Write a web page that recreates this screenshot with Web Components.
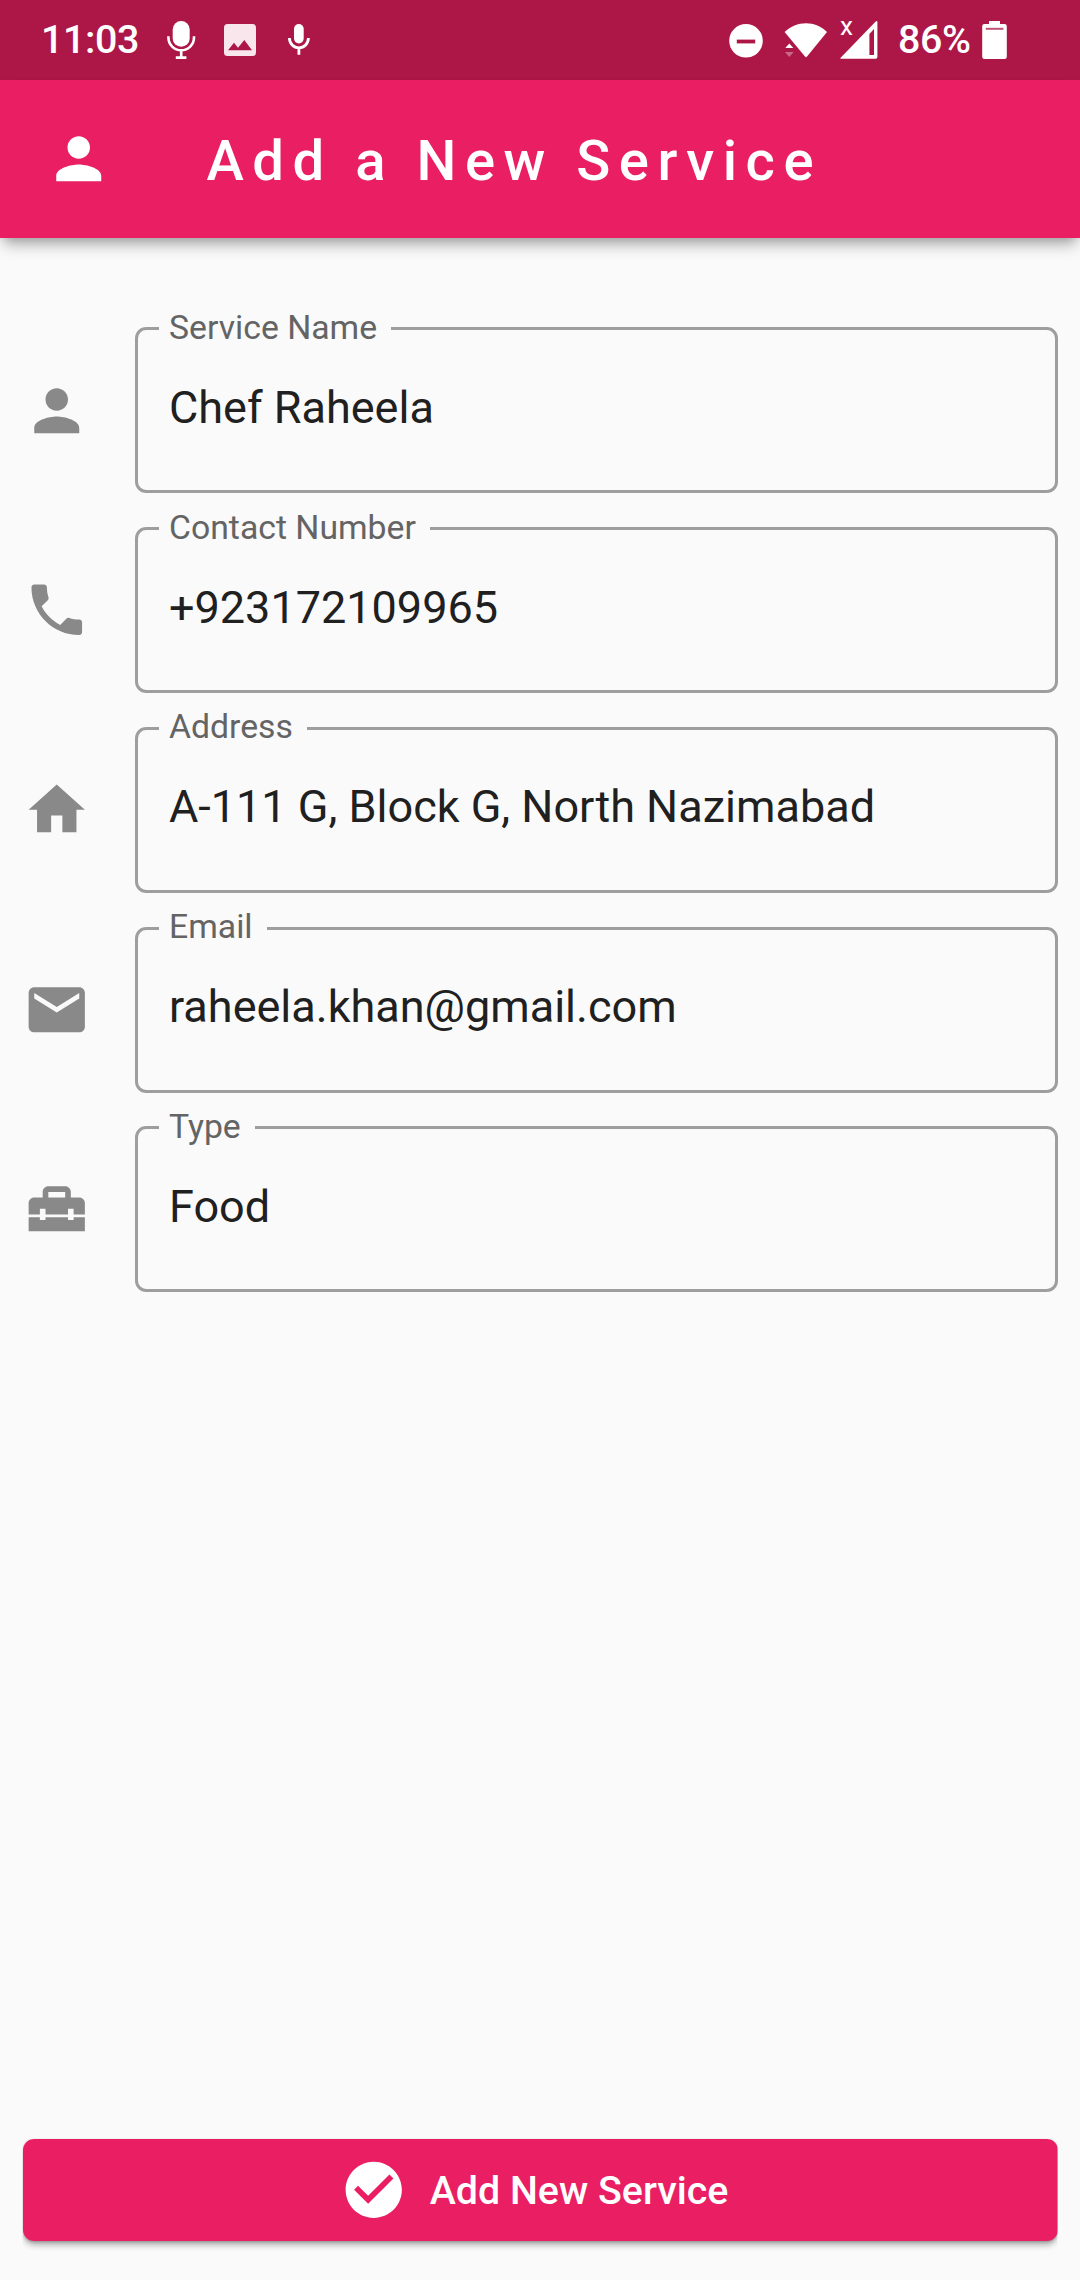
<!DOCTYPE html>
<html lang="en">
<head>
<meta charset="UTF-8">
<title>Add a New Service</title>
<style>
    html, body {
        margin: 0;
        height: 100%;
        background: #fafafa;
        font-family: Roboto, "Noto Sans", sans-serif;
    }
</style>
</head>
<body>
<service-app></service-app>

<script>
// Material icons, 24x24
const ICONS = {
    person: '<path d="M12 12c2.21 0 4-1.79 4-4s-1.79-4-4-4-4 1.79-4 4 1.79 4 4 4zm0 2c-2.67 0-8 1.34-8 4v2h16v-2c0-2.66-5.33-4-8-4z"/>',
    phone: '<path d="M6.62 10.79c1.44 2.83 3.76 5.14 6.59 6.59l2.2-2.2c.27-.27.67-.36 1.02-.24 1.12.37 2.33.57 3.57.57.55 0 1 .45 1 1V20c0 .55-.45 1-1 1-9.39 0-17-7.61-17-17 0-.55.45-1 1-1h3.5c.55 0 1 .45 1 1 0 1.25.2 2.45.57 3.57.11.35.03.74-.25 1.02l-2.2 2.2z"/>',
    home: '<path d="M10 20v-6h4v6h5v-8h3L12 3 2 12h3v8z"/>',
    email: '<path d="M20 4H4c-1.1 0-1.99.9-1.99 2L2 18c0 1.1.9 2 2 2h16c1.1 0 2-.9 2-2V6c0-1.1-.9-2-2-2zm0 4l-8 5-8-5V6l8 5 8-5v2z"/>',
    toolbox: '<path d="M18 16h-2v-1H8v1H6v-1H2v5h20v-5h-4zM20 8h-3V6c0-1.1-.9-2-2-2H9c-1.1 0-2 .9-2 2v2H4c-1.1 0-2 .9-2 2v4h4v-2h2v2h8v-2h2v2h4v-4c0-1.1-.9-2-2-2zm-5 0H9V6h6v2z"/>',
    check: '<path d="M12 2C6.48 2 2 6.48 2 12s4.48 10 10 10 10-4.48 10-10S17.52 2 12 2zm-2 15l-5-5 1.41-1.41L10 14.17l7.59-7.59L19 8l-9 9z"/>'
};

class MdIcon extends HTMLElement {

    constructor() {
        super();
        this.shadow = this.attachShadow({mode: 'open'});
    }

    connectedCallback() {
        this.shadow.innerHTML =
        /*html*/`
        <style>
            :host{
                display:block;
                flex:none;
                width:67.5px;
                height:67.5px;
            }

            svg{
                display:block;
                width:100%;
                height:100%;
                fill:currentColor;
            }
        </style>
        <svg viewBox="0 0 24 24">${ICONS[this.getAttribute('name')]}</svg>
        `;
    }
}

customElements.define('md-icon', MdIcon);

class StatusBar extends HTMLElement {

    constructor() {
        super();
        this.shadow = this.attachShadow({mode: 'open'});
        this.render();
    }

    render() {
        this.shadow.innerHTML =
        /*html*/`
        <style>
            :host{
                display:flex;
                justify-content:space-between;
                align-items:center;
                box-sizing:border-box;
                height:80px;
                padding:0 73px 0 41px;
                background:#ad1748;
                color:white;
                font-size:39.4px;
                font-weight:500;
            }

            .side{
                display:flex;
                align-items:center;
            }

            .left{
                gap:28px;
            }

            .time{
                width:97px;
                padding-bottom:2px;
                letter-spacing:-.4px;
                white-space:nowrap;
            }

            .battery-level{
                width:84px;
                margin-left:20px;
                padding-bottom:2px;
                letter-spacing:-.4px;
                white-space:nowrap;
            }

            svg{
                display:block;
                flex:none;
                height:40px;
                fill:white;
            }

            .wifi{
                margin-left:21px;
            }

            .signal{
                margin-left:13px;
                overflow:visible;
            }

            .line{
                fill:none;
                stroke:white;
            }

            .cut{
                fill:#ad1748;
            }
        </style>
        <div class="side left">
            <span class="time">11:03</span>
            <svg width="30" viewBox="0 0 30 40">
                <rect x="6.7" y="1" width="17" height="25.7" rx="8.5"/>
                <path class="line" stroke-width="2.6" d="M2.4 16.3v1.2a12.8 12.8 0 0 0 25.6 0v-1.2M15.2 30v8M9.8 37.6h10.6"/>
            </svg>
            <svg width="32" viewBox="0 0 32 40">
                <rect y="4" width="32" height="32" rx="3.5" fill="#f8e6ec"/>
                <path class="cut" d="M4 30.3l6-7.6 4 5 6.3-7.7 7.7 10.3z"/>
            </svg>
            <svg width="30" viewBox="0 0 30 40">
                <rect x="10" y="4" width="9.7" height="19.4" rx="4.8"/>
                <path class="line" stroke-width="2.8" d="M5.4 18a9.5 9.9 0 0 0 19 0M14.9 28v6.7"/>
            </svg>
        </div>
        <div class="side">
            <svg width="34" viewBox="0 0 34 40">
                <circle cx="17" cy="20.8" r="16.8"/>
                <rect class="cut" x="7.8" y="19.6" width="18.4" height="3.8"/>
            </svg>
            <svg class="wifi" width="43" viewBox="0 0 43 40">
                <path d="M.6 12C6.6 6 14 3.2 22 3.2S37.2 6 43 12L23 36.6Q22 37.7 21 36.6z"/>
                <path d="M1.3 28l4-4.4 4 4.4z"/>
                <path d="M1 32h8.6l-4.3 5z" opacity=".35"/>
            </svg>
            <svg class="signal" width="38" viewBox="0 0 38 40">
                <path d="M37.4 2v35q0 1.7-1.7 1.7H1q-1.4 0-.4-1L35.7 1.5q1.7-1.3 1.7.5z"/>
                <path class="cut" d="M29.4 14l4.6-5v26h-4.6z"/>
                <text x="0" y="15" font-size="25" font-weight="400" textLength="13" lengthAdjust="spacingAndGlyphs">x</text>
            </svg>
            <span class="battery-level">86%</span>
            <svg width="25" viewBox="0 0 25 40">
                <path d="M7 1h11v3h4.5q2.3 0 2.3 2.3v30.4q0 2.3-2.3 2.3h-20Q.2 39 .2 36.7V6.3Q.2 4 2.5 4H7z"/>
                <rect class="cut" x="3.8" y="7.8" width="17.6" height="2" opacity=".75"/>
            </svg>
        </div>
        `;
    }
}

customElements.define('status-bar', StatusBar);

class AppHeader extends HTMLElement {

    constructor() {
        super();
        this.shadow = this.attachShadow({mode: 'open'});
        this.render();
    }

    render() {
        this.shadow.innerHTML =
        /*html*/`
        <style>
            :host{
                display:flex;
                align-items:center;
                gap:94px;
                box-sizing:border-box;
                height:157.5px;
                padding-left:45px;
                background:#e91e63;
                color:white;
                box-shadow:0 11px 14px -4px rgba(0,0,0,.28), 0 3px 10px -3px rgba(0,0,0,.2);
            }

            h1{
                margin:0;
                padding-top:4px;
                font-size:56.25px;
                font-weight:500;
                letter-spacing:8.5px;
                white-space:nowrap;
            }
        </style>
        <md-icon name="person"></md-icon>
        <h1><slot></slot></h1>
        `;
    }
}

customElements.define('app-header', AppHeader);

class FormField extends HTMLElement {

    constructor() {
        super();
        this.shadow = this.attachShadow({mode: 'open'});
    }

    connectedCallback() {
        this.shadow.innerHTML =
        /*html*/`
        <style>
            :host{
                display:flex;
                align-items:center;
                gap:45px;
                height:165.94px;
            }

            md-icon{
                color:#898989;
            }

            fieldset{
                flex:1;
                box-sizing:border-box;
                min-width:0;
                height:184.5px;
                margin:-18.5px 0 0;
                padding:0 0 0 21px;
                border:3px solid #9e9e9e;
                border-radius:11.25px;
            }

            legend{
                height:40px;
                padding:0 14px 0 10px;
                color:#646464;
                font-size:33.75px;
                line-height:38.5px;
            }

            .value{
                padding:32px 0 0 10px;
                color:#202020;
                font-size:45px;
                line-height:54px;
                white-space:nowrap;
            }
        </style>
        <md-icon name="${this.getAttribute('icon')}"></md-icon>
        <fieldset>
            <legend>${this.getAttribute('label')}</legend>
            <div class="value"><slot></slot></div>
        </fieldset>
        `;
    }
}

customElements.define('form-field', FormField);

class SubmitButton extends HTMLElement {

    constructor() {
        super();
        this.shadow = this.attachShadow({mode: 'open'});
        this.render();
    }

    render() {
        this.shadow.innerHTML =
        /*html*/`
        <style>
            :host{
                display:block;
                padding-bottom:39.38px;
                clip-path:inset(-4px 0 0 0);
            }

            button{
                display:flex;
                justify-content:center;
                align-items:center;
                gap:22.5px;
                width:100%;
                height:101.25px;
                margin:0;
                padding:0 12px 0 0;
                border:none;
                border-radius:11.25px;
                background:#e91e63;
                color:white;
                font-family:inherit;
                font-size:39.38px;
                font-weight:500;
                box-shadow:0 5px 6px -1px rgba(0,0,0,.3), 0 1px 3px rgba(0,0,0,.2);
            }
        </style>
        <button>
            <md-icon name="check"></md-icon>
            <span><slot></slot></span>
        </button>
        `;
    }
}

customElements.define('submit-button', SubmitButton);

class ServiceApp extends HTMLElement {

    constructor() {
        super();
        this.shadow = this.attachShadow({mode: 'open'});
        this.render();
    }

    render() {
        this.shadow.innerHTML =
        /*html*/`
        <style>
            :host{
                display:flex;
                flex-direction:column;
                height:2280px;
            }

            main{
                display:flex;
                flex:1;
                flex-direction:column;
                justify-content:space-between;
                padding:90px 22.5px 0;
            }

            form{
                display:flex;
                flex-direction:column;
                gap:33.75px;
            }
        </style>
        <status-bar></status-bar>
        <app-header>Add a New Service</app-header>
        <main>
            <form>
                <form-field icon="person" label="Service Name">Chef Raheela</form-field>
                <form-field icon="phone" label="Contact Number">+923172109965</form-field>
                <form-field icon="home" label="Address">A-111 G, Block G, North Nazimabad</form-field>
                <form-field icon="email" label="Email">raheela.khan@gmail.com</form-field>
                <form-field icon="toolbox" label="Type">Food</form-field>
            </form>
            <submit-button>Add New Service</submit-button>
        </main>
        `;
    }
}

customElements.define('service-app', ServiceApp);
</script>
</body>
</html>
